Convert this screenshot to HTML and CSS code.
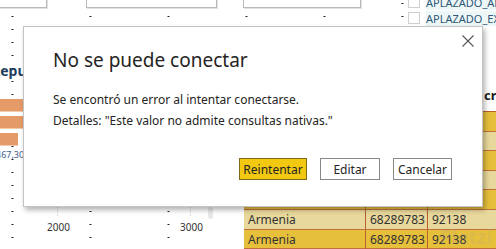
FILE: index.html
```html
<html>
    <head>
        <title>No se puede conectar</title>
        <link rel="stylesheet" href="styles.css">
    </head>
    <body>
        <div class="canvas">
            <!-- report visuals behind the dialog -->
            <div class="slicer slicer-a"></div>
            <div class="slicer slicer-b"></div>
            <div class="slicer slicer-c"></div>

            <div class="checklist">
                <div class="check-row"><span class="box"></span><span class="check-text">APLAZADO_ANULADO</span></div>
                <div class="check-row"><span class="box"></span><span class="check-text">APLAZADO_EXPIRADO</span></div>
            </div>

            <div class="bar-title">Repuestos por monto</div>
            <div class="bars">
                <div class="bar" style="width: 60px"></div>
                <div class="bar" style="width: 60px"></div>
                <div class="bar" style="width: 18px"></div>
            </div>
            <div class="bar-label">467,30</div>

            <div class="grid-line grid-a"></div>
            <div class="grid-line grid-b"></div>
            <div class="scroll-thumb"></div>
            <div class="axis axis-a">2000</div>
            <div class="axis axis-b">3000</div>

            <div class="bottom-title">Saldo de créditos por estado y producto</div>

            <div class="table-title">crecimiento</div>
            <div class="table">
                <div class="row gold"><span>Armenia</span><span>68289783</span><span>92138</span></div>
                <div class="row light"><span>Armenia</span><span>68289783</span><span>92138</span></div>
                <div class="row gold"><span>Armenia</span><span>68289783</span><span>92138</span></div>
                <div class="row light"><span>Armenia</span><span>68289783</span><span>92138</span></div>
                <div class="row gold"><span>Armenia</span><span>68289783</span><span>92138</span></div>
                <div class="row light"><span>Armenia</span><span>68289783</span><span>92138</span></div>
                <div class="row gold"><span>Armenia</span><span>68289783</span><span>92138</span></div>
            </div>
            <div class="watermark">Platzi</div>
        </div>

        <div class="dialog">
            <a class="closebtn">
                <svg width="12" height="12" viewBox="0 0 12 12">
                    <path d="M0.5 0.5 L11.5 11.5 M11.5 0.5 L0.5 11.5" stroke="#555" stroke-width="1.1" fill="none"/>
                </svg>
            </a>
            <h1>No se puede conectar</h1>
            <p>Se encontró un error al intentar conectarse.</p>
            <p>Detalles: "Este valor no admite consultas nativas."</p>
            <div class="buttons">
                <button class="button primary">Reintentar</button>
                <button class="button edit">Editar</button>
                <button class="button">Cancelar</button>
            </div>
        </div>
    </body>
</html>
```

FILE: styles.css
```css
body {
    margin: 0;
    width: 496px;
    height: 249px;
    overflow: hidden;
    position: relative;
    font-family: "Noto Sans", "Open Sans", sans-serif;
    color: #252423;
    background-color: white;
}

/* Report page with its dot grid */
.canvas {
    position: absolute;
    top: 0;
    left: 0;
    width: 496px;
    height: 249px;
    overflow: hidden;
    background-image: radial-gradient(circle, #222 0.55px, transparent 0.9px);
    background-size: 78px 13px;
    background-position: -26.5px 10px;
}

.slicer {
    position: absolute;
    top: -10px;
    height: 16px;
    border: 1px solid #b9b9b9;
    box-shadow: 1px 1px 0 #e2e2e2;
    background-color: white;
}
.slicer-a { left: -10px; width: 55px; }
.slicer-b { left: 86px; width: 129px; }
.slicer-c { left: 243px; width: 116px; }

.checklist {
    position: absolute;
    left: 408px;
    top: -6px;
}
.check-row {
    display: flex;
    align-items: center;
    height: 16px;
}
.check-row .box {
    width: 10px;
    height: 10px;
    border: 1px solid #cfcfcf;
    background-color: white;
    margin-right: 6px;
}
.check-text {
    font-size: 11px;
    color: #2f5878;
    background-color: #edf7f8;
    padding-right: 20px;
    line-height: 15px;
    white-space: nowrap;
}

.bar-title {
    position: absolute;
    left: -9px;
    top: 61px;
    font-size: 14px;
    font-weight: bold;
    color: #233e5e;
    white-space: nowrap;
}

.bars {
    position: absolute;
    left: 0;
    top: 99px;
    display: flex;
    flex-direction: column;
    gap: 4px;
}
.bar {
    height: 12px;
    background-color: #e49b68;
    border-bottom: 1px solid #f1c9ad;
}

.bar-label {
    position: absolute;
    left: -4px;
    top: 148px;
    font-size: 9px;
    color: #41608a;
}

.grid-line {
    position: absolute;
    top: 207px;
    height: 9px;
    border-left: 1px dotted #d2d2d2;
}
.grid-a { left: 57px; }
.grid-b { left: 190px; }

.scroll-thumb {
    position: absolute;
    left: 208px;
    top: 207px;
    width: 5px;
    height: 12px;
    border-radius: 3px;
    background-color: #e8e8e8;
}

.axis {
    position: absolute;
    top: 220px;
    font-size: 10px;
    color: #333;
}
.axis-a { left: 47px; }
.axis-b { left: 180px; }

.bottom-title {
    position: absolute;
    left: 12px;
    top: 244px;
    font-size: 15px;
    font-weight: bold;
    color: #252423;
    white-space: nowrap;
}

.table-title {
    position: absolute;
    left: 484px;
    top: 86px;
    font-size: 13px;
    font-weight: bold;
    color: #1b1b1b;
}

.table {
    position: absolute;
    left: 244px;
    top: 111px;
    width: 270px;
    border-top: 1px solid #b8612c;
}
.row {
    display: grid;
    grid-template-columns: 122px 62px 1fr;
    height: 19.6px;
    box-sizing: border-box;
    border-bottom: 1px solid #c07040;
    font-size: 12px;
    line-height: 19px;
    color: #333;
}
.row span {
    padding-left: 4px;
    border-right: 1px solid #b8612c;
}
.gold { background-color: #e6bf3b; }
.light { background-color: #e9d89b; }

.watermark {
    position: absolute;
    left: 440px;
    top: 224px;
    font-size: 19px;
    font-weight: bold;
    color: rgba(160, 160, 160, 0.18);
}

/* The dialog */
.dialog {
    position: absolute;
    left: 23px;
    top: 26px;
    width: 460px;
    height: 181px;
    box-sizing: border-box;
    padding: 19px 30px 0 29px;
    background-color: white;
    border: 1px solid #c4c4c4;
    box-shadow: 2px 3px 5px rgba(0, 0, 0, 0.3);
}

.dialog h1 {
    margin: 0 0 15px 0;
    font-size: 19px;
    font-weight: normal;
    line-height: 28px;
    color: #252423;
}

.dialog p {
    margin: 0;
    font-size: 12px;
    line-height: 21px;
    color: #252423;
}

.closebtn {
    position: absolute;
    top: 8px;
    right: 8px;
}

.buttons {
    display: flex;
    justify-content: flex-end;
    gap: 13px;
    margin-top: 27px;
}

.button {
    width: 59px;
    height: 22px;
    padding: 0;
    font-family: "Noto Sans", "Open Sans", sans-serif;
    font-size: 12px;
    color: #252423;
    background-color: white;
    border: 1px solid #8a8886;
    border-radius: 0;
}
.button.edit { width: 60px; }

.primary {
    width: 68px;
    background-color: #f2c811;
    border-color: #7d6a1c;
}
```
